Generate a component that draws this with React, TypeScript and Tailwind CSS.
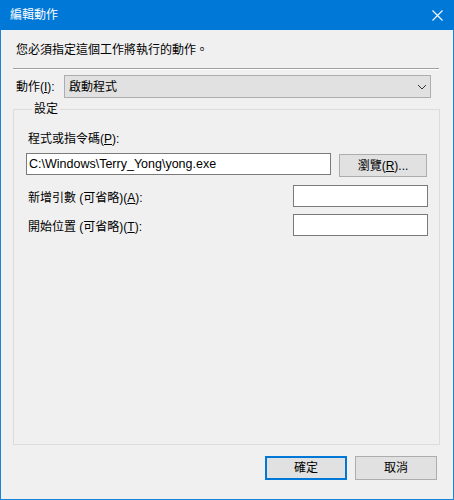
const font = "font-['Liberation_Sans','Noto_Sans_CJK_TC',sans-serif]";

function Field({ w, value }: { w: string; value?: string }) {
  return (
    <div className={`${w} h-[22px] border border-[#7a7a7a] bg-white flex items-center pl-[2px] text-[12.5px] leading-[16px]`}>
      {value}
    </div>
  );
}

function Btn({ children, primary }: { children: React.ReactNode; primary?: boolean }) {
  return (
    <button
      className={`w-[82px] h-[24px] bg-[#e1e1e1] flex items-center justify-center text-[12px] ${
        primary ? "border-2 border-[#0078d7]" : "border border-[#adadad]"
      }`}
    >
      {children}
    </button>
  );
}

export default function App() {
  return (
    <div className={`w-[454px] h-[500px] flex flex-col bg-[#f0f0f0] border-x border-b border-[#1883d7] text-black text-[12px] ${font}`}>
      {/* title bar */}
      <div className="h-[30px] -mx-px bg-[#0078d7] flex items-center justify-between pl-[10px] pr-[11px] text-white">
        <span className="leading-[16px]">編輯動作</span>
        <svg width="11" height="11" viewBox="0 0 11 11" stroke="white" strokeWidth="1.1" fill="none">
          <path d="M0.5 0.5 L10.5 10.5 M10.5 0.5 L0.5 10.5" />
        </svg>
      </div>

      <div className="flex flex-col pl-[12px] pr-[13px]">
        <div className="mt-[12px] pl-[3px] leading-[16px]">您必須指定這個工作將執行的動作。</div>
        <div className="mt-[10px] mr-px h-[2px] border-t border-[#a0a0a0] border-b border-b-white" />

        {/* action */}
        <div className="mt-[5px] flex items-center h-[23px]">
          <div className="w-[51px] pl-[3px] leading-[16px]">
            動作(<u>I</u>):
          </div>
          <div className="w-[367px] h-[23px] bg-[#e1e1e1] border border-[#adadad] flex items-center justify-between pl-[4px] pr-[3px]">
            <span className="leading-[16px]">啟動程式</span>
            <svg width="10" height="6" viewBox="0 0 10 6" fill="none" stroke="#333" strokeWidth="1">
              <path d="M1 1 L5 5 L9 1" />
            </svg>
          </div>
        </div>

        {/* settings group */}
        <fieldset className="mt-[3px] h-[344px] border border-[#dcdcdc] pl-[12px] pr-[11px]">
          <legend className="ml-[6px] px-[2px] leading-[16px]">設定</legend>

          <div className="mt-[14px] pl-[2px] leading-[16px]">
            程式或指令碼(<u>P</u>):
          </div>
          <div className="mt-[6px] flex items-start gap-[8px]">
            <Field w="w-[305px]" value="C:\Windows\Terry_Yong\yong.exe" />
            <div className="mt-px">
              <button className="w-[88px] h-[23px] bg-[#e1e1e1] border border-[#adadad] flex items-center justify-center">
                瀏覽(<u>R</u>)...
              </button>
            </div>
          </div>

          <div className="mt-[8px] flex items-start justify-between">
            <div className="pl-[2px] pt-[5px] leading-[16px]">
              新增引數 (可省略)(<u>A</u>):
            </div>
            <Field w="w-[135px]" />
          </div>
          <div className="mt-[7px] flex items-start justify-between">
            <div className="pl-[2px] pt-[5px] leading-[16px]">
              開始位置 (可省略)(<u>T</u>):
            </div>
            <Field w="w-[135px]" />
          </div>
        </fieldset>

        <div className="mt-[11px] flex justify-end gap-[8px] pr-[3px]">
          <Btn primary>確定</Btn>
          <Btn>取消</Btn>
        </div>
      </div>
    </div>
  );
}
